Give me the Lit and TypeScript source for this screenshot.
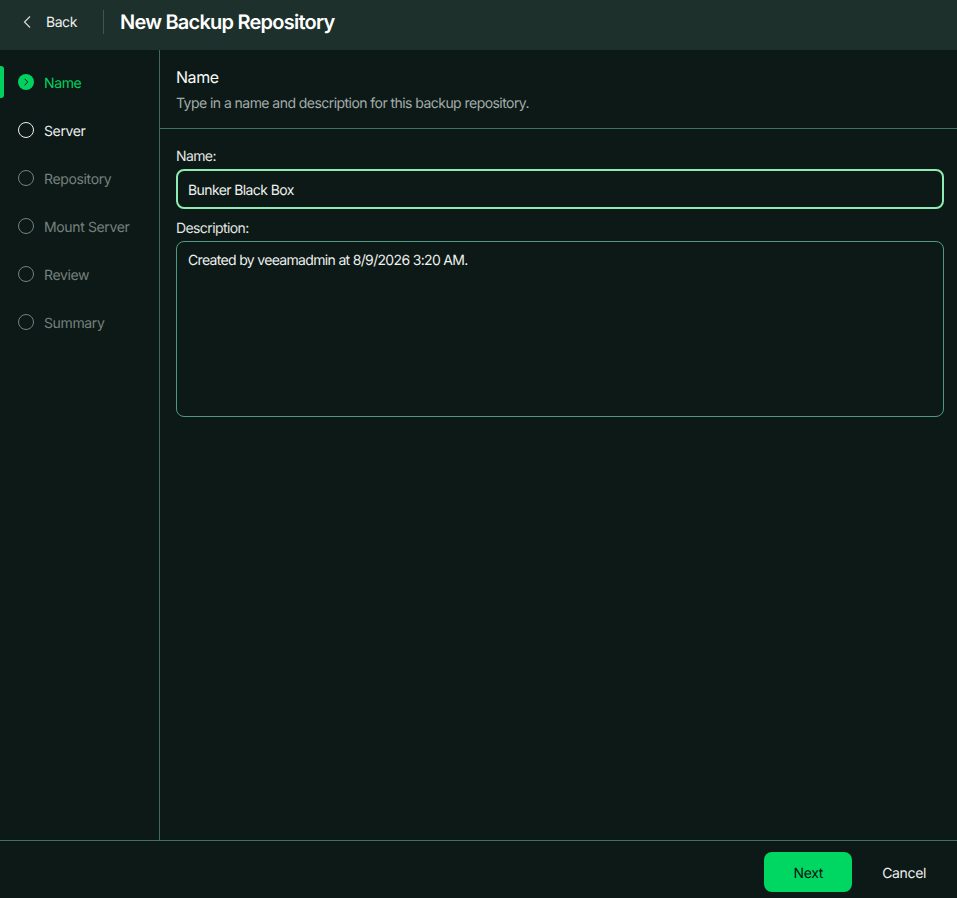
import { customElement, property } from "lit/decorators.js";
import { html, css, LitElement } from "lit";

const STEPS = ["Name", "Server", "Repository", "Mount Server", "Review", "Summary"];

@customElement("wizard-step")
export class WizardStep extends LitElement {
  @property()
  label: string = "";

  @property()
  state: string = "disabled";

  static styles = css`
    :host {
      display: flex;
      align-items: center;
      height: 48px;
      padding-left: 18px;
      gap: 10px;
      position: relative;
      font-size: 14px;
      letter-spacing: -0.36px;
      color: #75817e;
    }

    :host([state="active"]) {
      color: #00d15f;
    }

    :host([state="next"]) {
      color: #eef0ef;
    }

    .bar {
      position: absolute;
      left: 0;
      top: 8px;
      width: 4px;
      height: 32px;
      background: #00d15f;
      border-radius: 0 3px 3px 0;
    }

    svg {
      display: block;
      flex: none;
    }

    span {
      margin-top: 3px;
    }
  `;

  render() {
    const color = this.state === "next" ? "#eef0ef" : "#75817e";
    return html`
      ${this.state === "active" ? html`<div class="bar"></div>` : ""}
      ${this.state === "active"
        ? html`<svg width="16" height="16" viewBox="0 0 16 16">
            <circle cx="8" cy="8" r="8" fill="#00d15f"></circle>
            <path d="M6.6 4.8 L9.8 8 L6.6 11.2" fill="none" stroke="#0d1a17" stroke-width="1"></path>
          </svg>`
        : html`<svg width="16" height="16" viewBox="0 0 16 16">
            <circle cx="8" cy="8" r="7.5" fill="none" stroke="${color}" stroke-width="1"></circle>
          </svg>`}
      <span>${this.label}</span>
    `;
  }
}

@customElement("app-root")
export class AppRoot extends LitElement {
  static styles = css`
    * {
      box-sizing: border-box;
    }

    :host {
      display: flex;
      flex-direction: column;
      height: 898px;
      background: #0d1916;
      color: #eef0ef;
      font-family: Inter, "Liberation Sans", sans-serif;
      font-size: 14px;
      text-rendering: geometricPrecision;
      overflow: hidden;
    }

    .header {
      display: flex;
      align-items: center;
      height: 50px;
      flex: none;
      background: #1d302b;
      padding: 0 0 6px 22px;
    }

    .back {
      display: flex;
      align-items: center;
      gap: 13px;
      width: 81px;
      letter-spacing: -0.45px;
    }

    .back svg {
      display: block;
    }

    .divider {
      width: 1px;
      height: 24px;
      background: #3f5750;
      margin-right: 16px;
    }

    .title {
      font-size: 20px;
      font-weight: 600;
      color: #ffffff;
      letter-spacing: -0.77px;
    }

    .body {
      display: flex;
      flex: 1;
      min-height: 0;
    }

    .steps {
      width: 160px;
      flex: none;
      padding-top: 8px;
      border-right: 1px solid #3f6a5c;
    }

    .main {
      flex: 1;
      display: flex;
      flex-direction: column;
    }

    .intro {
      height: 79px;
      padding: 17px 16px 0;
      border-bottom: 1px solid #3f7262;
    }

    .intro h2 {
      margin: 0;
      font-size: 16px;
      line-height: 20px;
      font-weight: 400;
      letter-spacing: -0.45px;
      color: #f7f8f8;
    }

    .intro p {
      margin: 7px 0 0;
      line-height: 20px;
      letter-spacing: -0.55px;
      color: #a3acaa;
    }

    .form {
      display: flex;
      flex-direction: column;
      padding: 18px 13px 0 16px;
      letter-spacing: -0.6px;
    }

    label {
      display: block;
      line-height: 20px;
      color: #e2e6e4;
    }

    .field {
      margin-top: 2px;
      padding: 2px 10px 0;
      height: 40px;
      border: 2px solid #8debb3;
      border-radius: 8px;
      display: flex;
      align-items: center;
    }

    .form label.second {
      margin-top: 10px;
    }

    .area {
      margin-top: 2px;
      height: 176px;
      padding: 9px 11px;
      line-height: 20px;
      letter-spacing: -0.67px;
      border: 1px solid #4f9a80;
      border-radius: 8px;
    }

    .footer {
      flex: none;
      height: 58px;
      border-top: 1px solid #3f7262;
      display: flex;
      align-items: flex-start;
      justify-content: flex-end;
      padding: 11px 31px 0 0;
      gap: 30px;
      letter-spacing: -0.36px;
    }

    .next {
      width: 88px;
      height: 40px;
      padding-top: 2px;
      border-radius: 8px;
      background: #00d662;
      color: #0a1411;
      display: flex;
      align-items: center;
      justify-content: center;
    }

    .cancel {
      height: 40px;
      padding-top: 2px;
      display: flex;
      align-items: center;
    }
  `;

  render() {
    return html`
      <div class="header">
        <div class="back">
          <svg width="11" height="14" viewBox="0 0 11 14">
            <path d="M8 1.5 L2.5 7 L8 12.5" fill="none" stroke="#d5dad8" stroke-width="1.2"></path>
          </svg>
          <span>Back</span>
        </div>
        <div class="divider"></div>
        <div class="title">New Backup Repository</div>
      </div>
      <div class="body">
        <div class="steps">
          ${STEPS.map(
            (s, i) => html`<wizard-step
              .label=${s}
              state=${i === 0 ? "active" : i === 1 ? "next" : "disabled"}
            ></wizard-step>`
          )}
        </div>
        <div class="main">
          <div class="intro">
            <h2>Name</h2>
            <p>Type in a name and description for this backup repository.</p>
          </div>
          <div class="form">
            <label>Name:</label>
            <div class="field">Bunker Black Box</div>
            <label class="second">Description:</label>
            <div class="area">Created by veeamadmin at 8/9/2026 3:20 AM.</div>
          </div>
        </div>
      </div>
      <div class="footer">
        <div class="next">Next</div>
        <div class="cancel">Cancel</div>
      </div>
    `;
  }
}
